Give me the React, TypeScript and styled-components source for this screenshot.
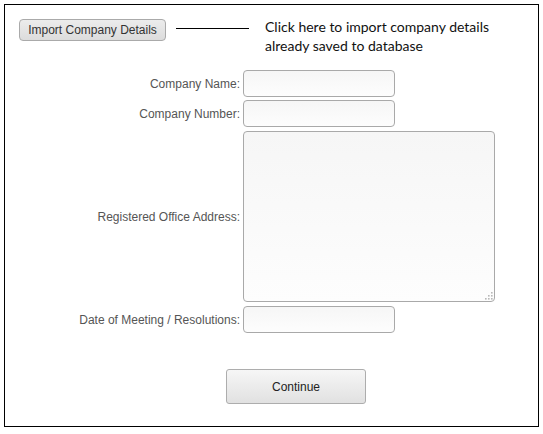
import React from "react";
import styled, {createGlobalStyle} from "styled-components";

const GlobalStyle = createGlobalStyle`
    html, body {
        margin: 0;
        padding: 0;
        background: #fff;
    }
    * {
        box-sizing: border-box;
    }
`;

const Frame = styled.div`
    margin: 4px 0 0 4px;
    width: 535px;
    height: 423px;
    border: 1px solid #000;
    padding: 14px 0 0 0;
    font-family: "Liberation Sans", Arial, sans-serif;
`;

const TopRow = styled.div`
    display: flex;
    align-items: flex-start;
    height: 22px;
    padding-left: 14px;
`;

const ImportButton = styled.button`
    width: 147px;
    height: 22px;
    padding: 0;
    border: 1px solid #aaa;
    border-radius: 4px;
    background: linear-gradient(#ececec, #dcdcdc);
    font-family: "Liberation Sans", Arial, sans-serif;
    font-size: 12px;
    color: #333;
    cursor: pointer;
`;

const Pointer = styled.div`
    width: 73px;
    height: 1px;
    background: #000;
    margin: 9px 0 0 10px;
`;

const Note = styled.div`
    margin: -2px 0 0 16px;
    font-family: Lato, "Open Sans", sans-serif;
    font-size: 14px;
    line-height: 19px;
    color: #111;
`;

const Form = styled.div`
    display: grid;
    grid-template-columns: 235px auto;
    column-gap: 3px;
    row-gap: 3px;
    margin-top: 29px;
    align-items: center;
`;

const Label = styled.label`
    text-align: right;
    font-size: 12px;
    color: #555;
`;

const fieldLook = `
    border: 1px solid #a9a9a9;
    border-radius: 4px;
    background: linear-gradient(#f6f6f6, #fdfdfd);
    font-family: "Liberation Sans", Arial, sans-serif;
    font-size: 12px;
    outline: none;
`;

const TextInput = styled.input`
    ${fieldLook}
    width: 152px;
    height: 27px;
    padding: 0 4px;
`;

const AreaBox = styled.div`
    position: relative;
    width: 252px;
    height: 171px;
    margin: 1px 0;
`;

const TextArea = styled.textarea`
    ${fieldLook}
    width: 100%;
    height: 100%;
    resize: none;
    padding: 4px;
    display: block;
`;

const Grip = styled.svg`
    position: absolute;
    right: 2px;
    bottom: 2px;
    pointer-events: none;
`;

const Footer = styled.div`
    padding-left: 221px;
    margin-top: 36px;
`;

const ContinueButton = styled.button`
    width: 140px;
    height: 35px;
    border: 1px solid #adadad;
    border-radius: 3px;
    background: linear-gradient(#f6f6f6, #e1e1e1);
    font-family: "Liberation Sans", Arial, sans-serif;
    font-size: 12px;
    color: #222;
    cursor: pointer;
`;

const fields = [
    {label: "Company Name:", area: false},
    {label: "Company Number:", area: false},
    {label: "Registered Office Address:", area: true},
    {label: "Date of Meeting / Resolutions:", area: false},
];

const gripDots = [[7, 1], [4, 4], [7, 4], [1, 7], [4, 7], [7, 7]];

export default function App() {
    return <>
        <GlobalStyle/>
        <Frame>
            <TopRow>
                <ImportButton>Import Company Details</ImportButton>
                <Pointer/>
                <Note>
                    Click here to import company details<br/>
                    already saved to database
                </Note>
            </TopRow>
            <Form>
                {fields.map(f => <React.Fragment key={f.label}>
                    <Label>{f.label}</Label>
                    {f.area ? <AreaBox>
                        <TextArea/>
                        <Grip width="9" height="9" viewBox="0 0 9 9">
                            {gripDots.map(([x, y]) =>
                                <rect key={`${x}-${y}`} x={x} y={y} width="1.6" height="1.6" fill="#b8b8b8"/>)}
                        </Grip>
                    </AreaBox> : <TextInput type="text"/>}
                </React.Fragment>)}
            </Form>
            <Footer>
                <ContinueButton>Continue</ContinueButton>
            </Footer>
        </Frame>
    </>;
}
